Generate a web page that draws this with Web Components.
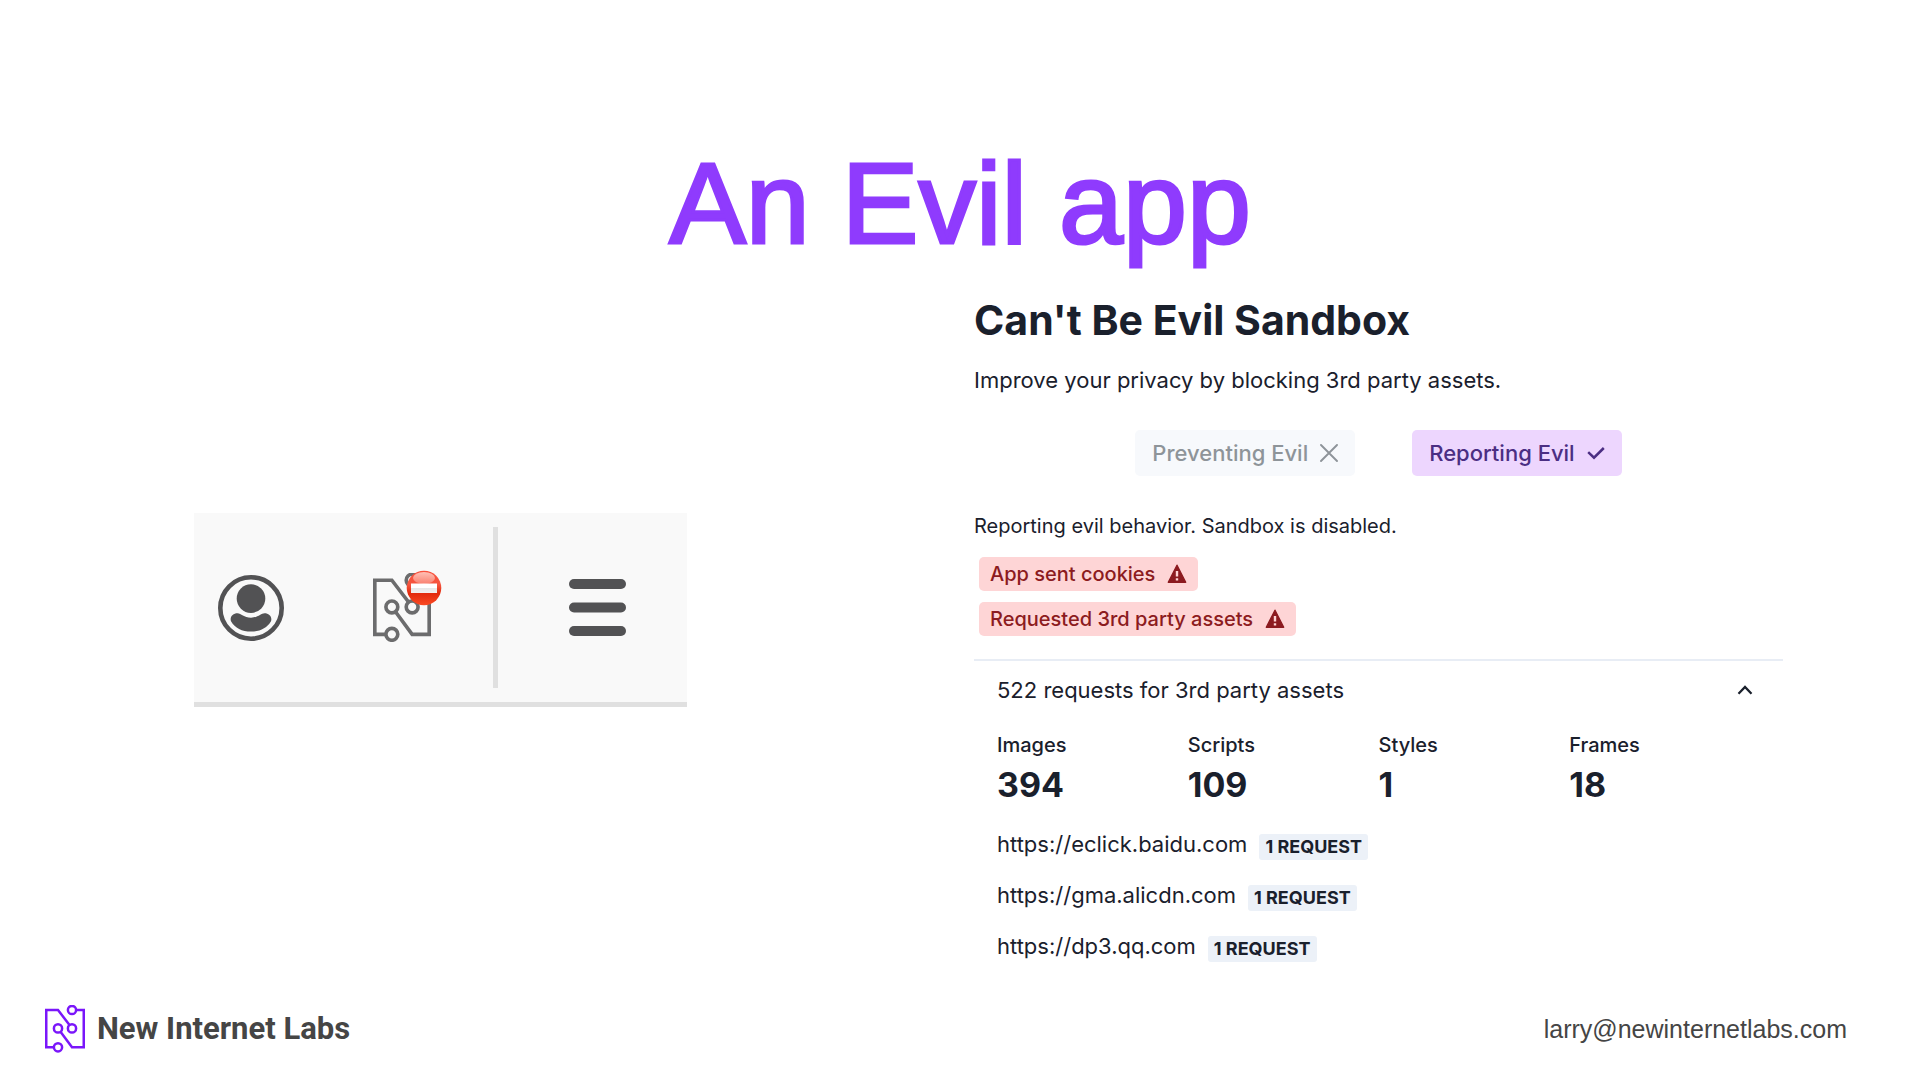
<!DOCTYPE html>
<html lang="en">
<head>
<meta charset="utf-8">
<title>An Evil app</title>
<style>
  html { background: #fff; }
  body { margin: 0; font-family: Inter, "Liberation Sans", sans-serif; color: #1a202c; }
</style>
</head>
<body>
<deck-slide>
  <slide-title slot="title">An Evil app</slide-title>
  <browser-toolbar slot="aside"></browser-toolbar>
  <sandbox-panel slot="content">
    <span slot="heading">Can't Be Evil Sandbox</span>
    <span slot="lead">Improve your privacy by blocking 3rd party assets.</span>
    <mode-button slot="modes" icon="cross">Preventing Evil</mode-button>
    <mode-button slot="modes" icon="check" active>Reporting Evil</mode-button>
    <span slot="status">Reporting evil behavior. Sandbox is disabled.</span>
    <warning-badge slot="warnings">App sent cookies</warning-badge>
    <warning-badge slot="warnings">Requested 3rd party assets</warning-badge>
    <request-report slot="report">
      <span slot="summary">522 requests for 3rd party assets</span>
      <stat-item slot="stats" value="394">Images</stat-item>
      <stat-item slot="stats" value="109">Scripts</stat-item>
      <stat-item slot="stats" value="1">Styles</stat-item>
      <stat-item slot="stats" value="18">Frames</stat-item>
      <host-row slot="hosts" count="1 REQUEST">https://eclick.baidu.com</host-row>
      <host-row slot="hosts" count="1 REQUEST">https://gma.alicdn.com</host-row>
      <host-row slot="hosts" count="1 REQUEST">https://dp3.qq.com</host-row>
    </request-report>
  </sandbox-panel>
  <slide-footer slot="footer">
    <span slot="brand">New Internet Labs</span>
    <span slot="contact">larry@newinternetlabs.com</span>
  </slide-footer>
</deck-slide>

<script>
const define = (name, html, setup) => {
  const template = document.createElement('template');
  template.innerHTML = html;
  customElements.define(name, class extends HTMLElement {
    constructor() {
      super();
      this.attachShadow({ mode: 'open' }).append(template.content.cloneNode(true));
    }
    connectedCallback() { if (setup) setup(this, this.shadowRoot); }
  });
};

define('deck-slide', `
<style>
  :host { display: flex; flex-direction: column; min-height: 100vh; box-sizing: border-box; padding: 138px 0 27px; }
  main { display: grid; grid-template-columns: minmax(0, 493fr) minmax(0, 809fr); gap: 287px; padding: 29px 137px 0 194px; align-items: start; }
  .aside { padding-top: 216px; }
  .footer { margin-top: auto; }
</style>
<header><slot name="title"></slot></header>
<main>
  <div class="aside"><slot name="aside"></slot></div>
  <slot name="content"></slot>
</main>
<div class="footer"><slot name="footer"></slot></div>`);

define('slide-title', `
<style>
  :host { display: block; }
  h1 { margin: 0; text-align: center; font: 400 115px/130px "Liberation Sans", sans-serif; color: #8f3bfd; -webkit-text-stroke: 3px #8f3bfd; }
</style>
<h1><slot></slot></h1>`);

define('circuit-mark', `
<style>
  :host { display: block; }
  svg { display: block; width: 100%; }
</style>
<svg viewBox="0 0 40 48" fill="none" stroke="currentColor" stroke-width="2.5" aria-hidden="true">
  <path d="M8.8 42.3H1.25V5H13L24.5 20"/>
  <path d="M31.2 5H38.75V42.3H27L15.5 26.7"/>
  <circle cx="27" cy="5" r="4.1"/><circle cx="13" cy="23.4" r="4.1"/>
  <circle cx="27" cy="23.4" r="4.1"/><circle cx="13" cy="42.3" r="4.1"/>
</svg>`);

define('browser-toolbar', `
<style>
  :host { display: flex; align-items: center; height: 189px; padding-left: 24px; background: #f9f9f9; border-bottom: 5px solid #e0e0e0; color: #525254; }
  button { display: block; padding: 0; border: 0; background: none; color: inherit; flex: none; }
  svg { display: block; }
  .profile { width: 66px; }
  .extension { position: relative; width: 58px; margin-left: 89px; color: #6c6c6d; }
  .blocked { position: absolute; left: 33px; top: -3px; }
  .rule { width: 5px; height: 161px; margin: 0 71px 0 62px; background: #e0e0e0; flex: none; }
  .menu { width: 57px; }
</style>
<button class="profile" aria-label="Profile">
  <svg width="66" height="66" viewBox="0 0 66 66">
    <circle cx="33" cy="33" r="30.7" fill="none" stroke="currentColor" stroke-width="4.6"/>
    <circle cx="33" cy="23.6" r="14.3" fill="currentColor"/>
    <path d="M19.500 38.300C23 38.300 26 42.700 33 42.700S43 38.300 46.500 38.300C51 38.300 54.500 42 53 46.200C49 53 42 56.600 33 56.600S17 53 13 46.200C11.500 42 15 38.300 19.500 38.300Z" fill="currentColor"/>
  </svg>
</button>
<button class="extension" aria-label="Sandbox extension">
  <circuit-mark></circuit-mark>
  <svg class="blocked" width="36" height="36" viewBox="0 0 36 36">
    <defs>
      <linearGradient id="ball" x1="0" y1="0" x2="0" y2="1">
        <stop offset="0" stop-color="#f8503c"/><stop offset=".4" stop-color="#f5553f"/><stop offset=".65" stop-color="#e22a0c"/><stop offset="1" stop-color="#fa4a24"/>
      </linearGradient>
      <linearGradient id="shine" x1="0" y1="0" x2="0" y2="1">
        <stop offset="0" stop-color="#ffc0b5"/><stop offset="1" stop-color="#f9806f"/>
      </linearGradient>
      <linearGradient id="bar" x1="0" y1="0" x2="0" y2="1">
        <stop offset="0" stop-color="#fff"/><stop offset=".45" stop-color="#fff"/><stop offset=".5" stop-color="#e6e8e8"/><stop offset="1" stop-color="#f4f0ee"/>
      </linearGradient>
    </defs>
    <circle cx="18" cy="18" r="17.300" fill="url(#ball)"/>
    <ellipse cx="18" cy="8" rx="11" ry="6" fill="url(#shine)"/>
    <rect x="5" y="13.500" width="26" height="9.500" fill="url(#bar)"/>
  </svg>
</button>
<div class="rule"></div>
<button class="menu" aria-label="Menu">
  <svg width="57" height="57" viewBox="0 0 57 57" fill="currentColor">
    <rect width="57" height="10" rx="5"/><rect y="23.500" width="57" height="10" rx="5"/><rect y="47" width="57" height="10" rx="5"/>
  </svg>
</button>`);

define('sandbox-panel', `
<style>
  :host { display: block; }
  h2 { margin: 0; font-size: 41px; line-height: 46px; font-weight: 700; }
  p { margin: 0; }
  .lead { margin-top: 21px; font-size: 22px; line-height: 32px; }
  .modes { display: flex; justify-content: center; gap: 57px; margin-top: 34px; }
  .status { margin-top: 36px; font-size: 20px; line-height: 28px; }
  .warnings { display: flex; flex-direction: column; align-items: flex-start; gap: 11px; margin: 17px 0 23px; padding-left: 5px; }
</style>
<h2><slot name="heading"></slot></h2>
<p class="lead"><slot name="lead"></slot></p>
<div class="modes"><slot name="modes"></slot></div>
<p class="status"><slot name="status"></slot></p>
<div class="warnings"><slot name="warnings"></slot></div>
<slot name="report"></slot>`);

define('mode-button', `
<style>
  :host { display: block; }
  button { display: flex; align-items: center; gap: 12px; height: 46px; padding: 0 17px; border: 0; border-radius: 5px; background: #f7f9fc; color: #8e9499; font: 500 22px/32px Inter, sans-serif; white-space: nowrap; }
  :host([active]) button { background: #edd6fe; color: #4b2e83; }
  svg { display: none; width: 18px; height: 18px; fill: none; stroke: currentColor; }
  :host([icon="cross"]) .cross, :host([icon="check"]) .check { display: block; }
</style>
<button type="button"><slot></slot>
  <svg class="cross" viewBox="0 0 18 18" stroke-width="1.900" stroke-linecap="round"><path d="M1 1L17 17M17 1L1 17"/></svg>
  <svg class="check" viewBox="0 0 18 18" stroke-width="2.500"><path d="M1.200 8.200L7 13.700L16.800 4"/></svg>
</button>`, (host, root) => {
  root.querySelector('button').setAttribute('aria-pressed', host.hasAttribute('active'));
});

define('warning-badge', `
<style>
  :host { display: flex; align-items: center; gap: 12px; height: 34px; padding: 0 11px; border-radius: 5px; background: #fed5d6; color: #8c1b20; font-size: 20px; line-height: 28px; font-weight: 500; white-space: nowrap; }
  svg { display: block; width: 20px; height: 20px; }
</style>
<slot></slot>
<svg viewBox="0 0 20 20" aria-hidden="true">
  <path d="M10 1.200L18.700 18.200H1.300Z" fill="currentColor" stroke="currentColor" stroke-width="1.400" stroke-linejoin="round"/>
  <path d="M10 7V12.400M10 14.200V16.600" stroke="#fed5d6" stroke-width="2.400"/>
</svg>`);

define('request-report', `
<style>
  :host { display: block; border-top: 2px solid #e8edf5; }
  button { display: flex; justify-content: space-between; align-items: center; width: 100%; height: 57px; padding: 0 30px 0 23px; border: 0; background: none; color: inherit; font: 400 22px/32px Inter, sans-serif; text-align: left; }
  svg { display: block; width: 16px; height: 10px; }
  .stats { display: grid; grid-template-columns: repeat(4, minmax(0, 1fr)); padding: 15px 23px 0; }
  .hosts { display: flex; flex-direction: column; gap: 20px; padding: 24px 23px 0; }
</style>
<button type="button" aria-expanded="true"><slot name="summary"></slot>
  <svg viewBox="0 0 16 10" fill="none" stroke="currentColor" stroke-width="2.300"><path d="M1.500 8.700L8 2L14.500 8.700"/></svg>
</button>
<div class="stats"><slot name="stats"></slot></div>
<div class="hosts"><slot name="hosts"></slot></div>`);

define('stat-item', `
<style>
  :host { display: flex; flex-direction: column; gap: 8px; }
  .label { font-size: 20px; line-height: 24px; font-weight: 500; }
  .value { font-size: 34px; line-height: 40px; font-weight: 700; }
</style>
<span class="label"><slot></slot></span>
<span class="value"></span>`, (host, root) => {
  root.querySelector('.value').textContent = host.getAttribute('value');
});

define('host-row', `
<style>
  :host { display: flex; align-items: center; gap: 12px; font-size: 22px; line-height: 31px; }
  .count { margin-top: 4px; padding: 0 6px; border-radius: 3px; background: #ecf1f8; font-size: 18px; line-height: 26px; font-weight: 700; white-space: nowrap; }
</style>
<span><slot></slot></span><span class="count"></span>`, (host, root) => {
  root.querySelector('.count').textContent = host.getAttribute('count');
});

define('slide-footer', `
<style>
  :host { display: flex; justify-content: space-between; align-items: center; padding: 0 73px 0 45px; color: #454545; }
  .brand { display: flex; align-items: center; gap: 12px; font: 700 31px/40px Roboto, sans-serif; }
  circuit-mark { width: 40px; color: #7a16fa; }
  a { color: inherit; text-decoration: none; font: 400 25px/32px "Liberation Sans", sans-serif; }
</style>
<div class="brand"><circuit-mark></circuit-mark><slot name="brand"></slot></div>
<a href="mailto:larry@newinternetlabs.com"><slot name="contact"></slot></a>`);
</script>
</body>
</html>
